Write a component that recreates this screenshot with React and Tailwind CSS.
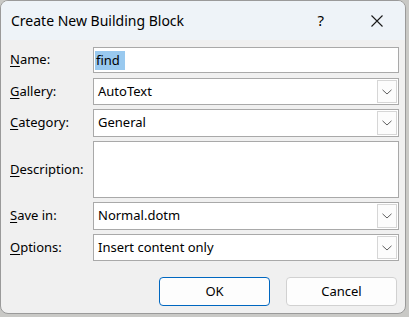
import React from "react";

const font = { fontFamily: '"Noto Sans", "Segoe UI", sans-serif' };

function Chevron() {
  return (
    <svg width="10" height="6" viewBox="0 0 10 6" className="block">
      <path d="M0.5 0.8 L5 5 L9.5 0.8" fill="none" stroke="#5f5f5f" strokeWidth="1" />
    </svg>
  );
}

function Combo({ value, h }) {
  return (
    <div className={`flex ${h} w-[306px] items-stretch border border-[#a9a9a9] bg-white`}>
      <div className="flex flex-1 items-center pl-[4px] text-[13px] text-black">{value}</div>
      <div className="my-[1px] mr-[1px] flex w-[20px] items-center justify-center border border-[#d6d6d6] bg-[#fcfcfc]">
        <Chevron />
      </div>
    </div>
  );
}

function Label({ u, rest }) {
  return (
    <div className="w-[83px] text-[13px] text-black">
      <u className="underline-offset-[2px]">{u}</u>
      {rest}
    </div>
  );
}

export default function App() {
  return (
    <div className="h-[317px] w-[409px] bg-[#c9c9c6]" style={font}>
      <div className="flex h-[314px] w-[406px] flex-col overflow-hidden rounded-[8px] border border-[#9a9a9a] bg-[#f0f0f0]">
        <div className="flex h-[39px] shrink-0 items-center bg-[#eef3f8] pl-[10px]">
          <div className="flex-1 text-[14px] text-black">Create New Building Block</div>
          <div className="mr-[47px] text-[15px] text-black">?</div>
          <svg width="12" height="12" viewBox="0 0 12 12" className="mr-[22px]">
            <path d="M0.5 0.5 L11.5 11.5 M11.5 0.5 L0.5 11.5" stroke="#1a1a1a" strokeWidth="1.1" />
          </svg>
        </div>
        <div className="flex flex-col pl-[9px] pt-[7px]">
          <div className="flex items-center">
            <Label u="N" rest="ame:" />
            <div className="flex h-[26px] w-[306px] items-center border border-[#a9a9a9] bg-white pl-[1px] text-[13px] text-black">
              <span className="bg-[#99c9ef] pl-[1px] pr-[5px] leading-[19px]">find</span>
            </div>
          </div>
          <div className="mt-[5px] flex items-center">
            <Label u="G" rest="allery:" />
            <Combo value="AutoText" h="h-[27px]" />
          </div>
          <div className="mt-[4px] flex items-center">
            <Label u="C" rest="ategory:" />
            <Combo value="General" h="h-[28px]" />
          </div>
          <div className="mt-[4px] flex items-center">
            <Label u="D" rest="escription:" />
            <div className="h-[57px] w-[306px] border border-[#a9a9a9] bg-white" />
          </div>
          <div className="mt-[4px] flex items-center">
            <Label u="S" rest="ave in:" />
            <Combo value="Normal.dotm" h="h-[28px]" />
          </div>
          <div className="mt-[4px] flex items-center">
            <Label u="O" rest="ptions:" />
            <Combo value="Insert content only" h="h-[27px]" />
          </div>
        </div>
        <div className="mt-[16px] flex gap-[16px] pl-[158px]">
          <button className="flex h-[29px] w-[111px] items-center justify-center rounded-[4px] border border-[#0067c0] bg-[#fdfdfd] text-[13px] text-black">
            OK
          </button>
          <button className="flex h-[29px] w-[111px] items-center justify-center rounded-[4px] border border-[#d1d1d1] bg-[#fdfdfd] text-[13px] text-black">
            Cancel
          </button>
        </div>
      </div>
    </div>
  );
}
